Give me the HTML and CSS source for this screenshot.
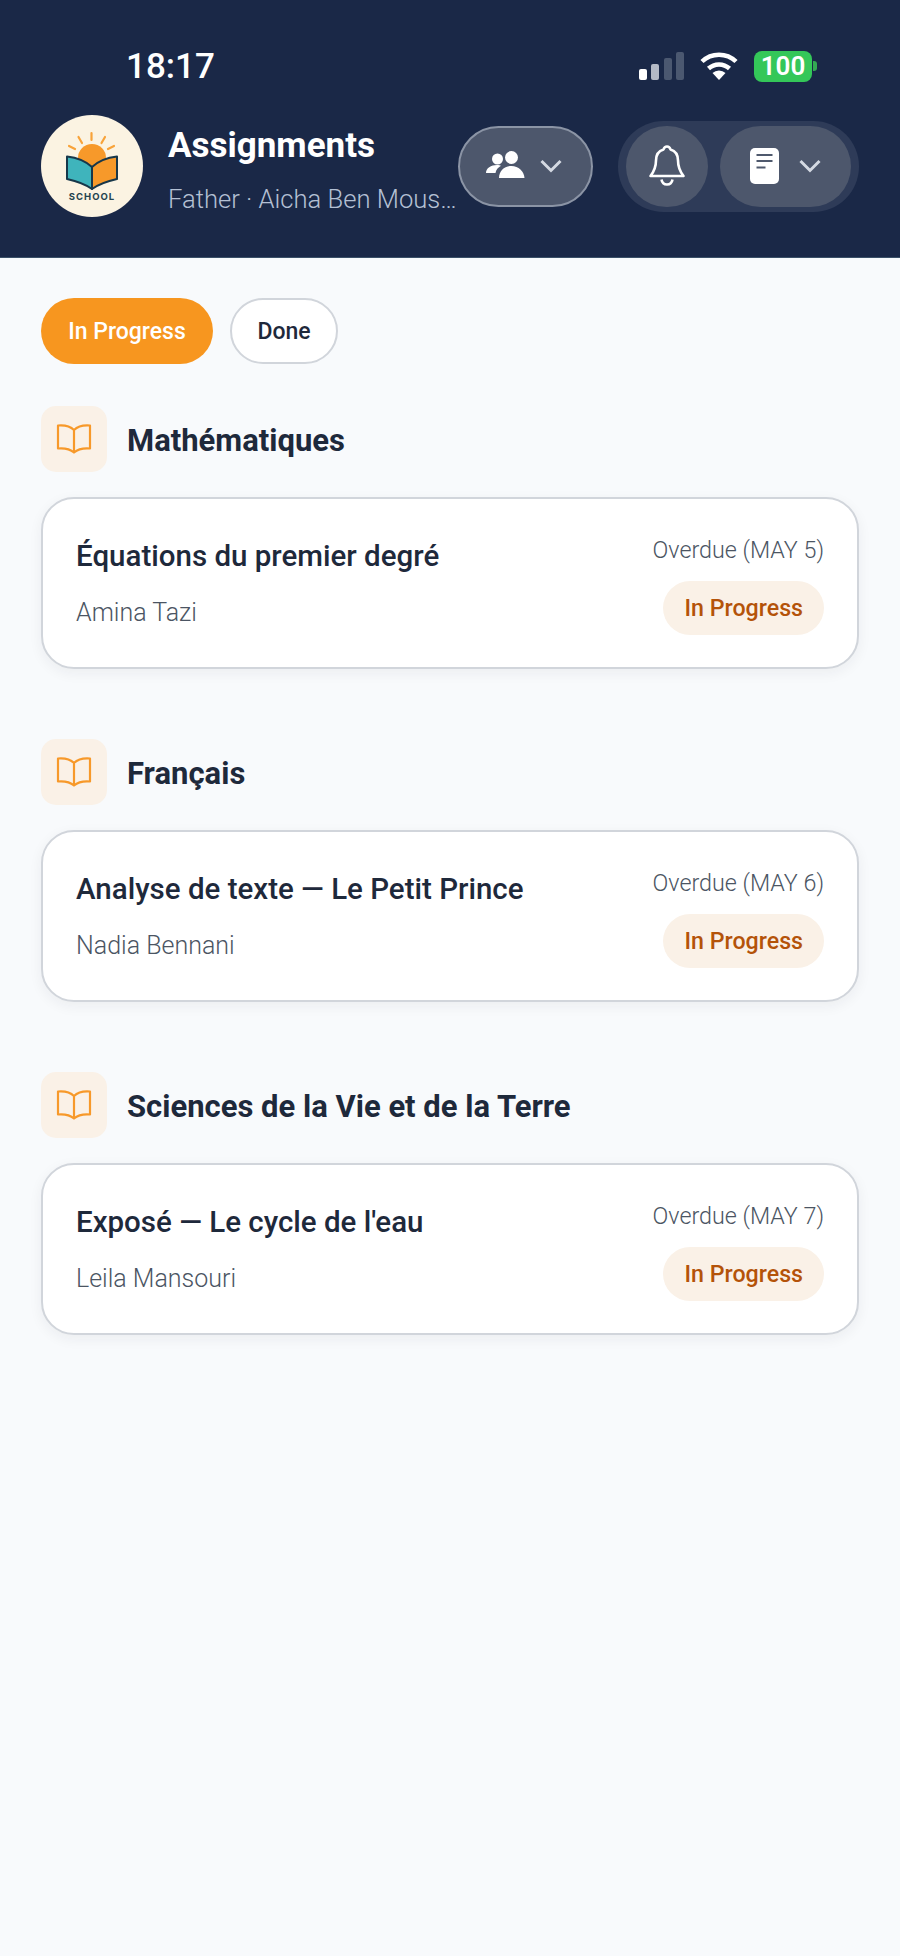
FILE: index.html
```html
<!DOCTYPE html>
<html lang="en">
<head>
  <meta charset="UTF-8">
  <title>Assignments</title>
  <link rel="stylesheet" href="styles.css">
</head>

<body>
<header class="top">
  <div class="status">
    <span class="clock">18:17</span>
    <div class="status-icons">
      <div class="signal">
        <span class="on"></span><span class="mid"></span><span></span><span></span>
      </div>
      <svg class="wifi" width="40" height="30" viewBox="0 0 40 30">
        <path d="M20 29l-6.500-7a9.500 9.500 0 0 1 13 0z" fill="#fff"/>
        <path d="M9.500 17.500a15.500 15.500 0 0 1 21 0" fill="none" stroke="#fff" stroke-width="4.500"/>
        <path d="M3 10.500a24.500 24.500 0 0 1 34 0" fill="none" stroke="#fff" stroke-width="4.500"/>
      </svg>
      <div class="battery"><span class="battery-level">100</span><span class="battery-tip"></span></div>
    </div>
  </div>

  <div class="bar">
    <div class="logo">
      <svg width="102" height="102" viewBox="0 0 102 102">
        <circle cx="51" cy="51" r="51" fill="#fbf3e2"/>
        <g stroke="#f8a33a" stroke-width="2.200" stroke-linecap="round">
          <path d="M50.500 18v7M37.500 22l3.500 6M64 22l-3.500 6M28 31l6 3M73 31l-6 3"/>
        </g>
        <circle cx="51" cy="43" r="14" fill="#f7992a"/>
        <path d="M26 41.500c9 1 18 4 25 10.500v22c-7-5-16-8-25-10z" fill="#3fb4bc" stroke="#17374a" stroke-width="2" stroke-linejoin="round"/>
        <path d="M76 41.500c-9 1-18 4-25 10.500v22c7-5 16-8 25-10z" fill="#f7992a" stroke="#17374a" stroke-width="2" stroke-linejoin="round"/>
        <text class="logo-text" x="51" y="84.500" text-anchor="middle">SCHOOL</text>
      </svg>
    </div>
    <div class="who">
      <h1>Assignments</h1>
      <p>Father · Aicha Ben Mous…</p>
    </div>
    <button class="pill pill-people">
      <svg width="40" height="30" viewBox="0 0 40 30" fill="#fff">
        <circle cx="11.500" cy="8" r="5.500"/>
        <circle cx="25.500" cy="6.500" r="6.500"/>
        <path d="M0 22c0-5 5-8 11-8 2 0 3 .3 4 .8-3 1.700-5 4-5.500 7.200z"/>
        <path d="M13 27c0-7 5.500-12 12.500-12S38 20 38.500 27z"/>
      </svg>
      <svg class="chev" width="22" height="14" viewBox="0 0 22 14"><path d="M1.500 2L11 11.500 20.500 2"/></svg>
    </button>
    <div class="tray">
      <button class="pill pill-bell">
        <svg width="36" height="42" viewBox="0 0 36 42" fill="none" stroke="#fff" stroke-width="2.600" stroke-linejoin="round">
          <path d="M18 1.500c1.800 0 3 1.300 3.500 3C26.500 6 29 10 29 15.500c0 7 2 11 5.500 15.500h-33C5 26.500 7 22.500 7 15.500 7 10 9.500 6 14.500 4.500c.5-1.700 1.700-3 3.500-3z"/>
          <path d="M12.500 34.500c.5 3 2.800 5 5.500 5s5-2 5.500-5"/>
        </svg>
      </button>
      <button class="pill pill-doc">
        <svg width="29" height="38" viewBox="0 0 29 38">
          <rect width="29" height="36" y="1" rx="5" fill="#fff"/>
          <path d="M6.500 8h16M6.500 14h16M6.500 20.500h9" stroke="#4f596d" stroke-width="2.200"/>
        </svg>
        <svg class="chev" width="22" height="14" viewBox="0 0 22 14"><path d="M1.500 2L11 11.500 20.500 2"/></svg>
      </button>
    </div>
  </div>
</header>

<main class="page">
  <div class="tabs">
    <button class="tab active">In Progress</button>
    <button class="tab">Done</button>
  </div>

  <section class="subject">
    <div class="subject-head">
      <span class="subject-icon">
        <svg width="36" height="32" viewBox="0 0 36 32"><use href="#book"/></svg>
      </span>
      <h2>Mathématiques</h2>
    </div>
    <article class="card">
      <div class="card-main">
        <h3>Équations du premier degré</h3>
        <p>Amina Tazi</p>
      </div>
      <div class="card-side">
        <span class="due">Overdue (MAY 5)</span>
        <span class="state">In Progress</span>
      </div>
    </article>
  </section>

  <section class="subject">
    <div class="subject-head">
      <span class="subject-icon">
        <svg width="36" height="32" viewBox="0 0 36 32"><use href="#book"/></svg>
      </span>
      <h2>Français</h2>
    </div>
    <article class="card">
      <div class="card-main">
        <h3>Analyse de texte — Le Petit Prince</h3>
        <p>Nadia Bennani</p>
      </div>
      <div class="card-side">
        <span class="due">Overdue (MAY 6)</span>
        <span class="state">In Progress</span>
      </div>
    </article>
  </section>

  <section class="subject">
    <div class="subject-head">
      <span class="subject-icon">
        <svg width="36" height="32" viewBox="0 0 36 32"><use href="#book"/></svg>
      </span>
      <h2>Sciences de la Vie et de la Terre</h2>
    </div>
    <article class="card">
      <div class="card-main">
        <h3>Exposé — Le cycle de l'eau</h3>
        <p>Leila Mansouri</p>
      </div>
      <div class="card-side">
        <span class="due">Overdue (MAY 7)</span>
        <span class="state">In Progress</span>
      </div>
    </article>
  </section>
</main>

<!-- shared book outline for the subject badges -->
<svg class="defs" width="0" height="0">
  <symbol id="book" viewBox="0 0 36 32">
    <path d="M18 7C14 3 8 2 2 2.500v23c6-.5 12 .5 16 4 4-3.500 10-4.500 16-4v-23C28 2 22 3 18 7zM18 7v22.500" fill="none" stroke="#f7992a" stroke-width="2.200" stroke-linejoin="round"/>
  </symbol>
</svg>
</body>
</html>
```

FILE: styles.css
```css
* {
  margin: 0;
  padding: 0;
  box-sizing: border-box;
  font-family: Roboto, "Noto Sans", Arial, sans-serif;
}

body {
  min-height: 1956px;
  background: #f8fafc;
  color: #1e293b;
}

button {
  border: 0;
  background: none;
}

/* Header */
.top {
  height: 258px;
  background: #1a2847;
  padding: 46px 41px 0;
  border-bottom: 1px solid #3a5068;
}

.status {
  height: 40px;
  display: flex;
  justify-content: space-between;
  align-items: center;
  padding: 0 42px 0 85px;
}

.clock {
  color: #fff;
  font-size: 35px;
  font-weight: 500;
}

.status-icons {
  display: flex;
  align-items: center;
  gap: 15px;
}

.signal {
  display: flex;
  align-items: flex-end;
  gap: 4.500px;
  height: 28px;
}

.signal span {
  width: 8px;
  height: 28px;
  border-radius: 2px;
  background: #4b5870;
}

.signal span:nth-child(1) {
  height: 11px;
  background: #fff;
}

.signal span:nth-child(2) {
  height: 16px;
  background: #b4bac6;
}

.signal span:nth-child(3) {
  height: 22px;
}

.battery {
  display: flex;
  align-items: center;
  gap: 1px;
}

.battery-level {
  width: 58px;
  height: 31px;
  border-radius: 8px;
  background: #34c759;
  color: #fff;
  font-size: 26px;
  font-weight: 600;
  line-height: 31px;
  text-align: center;
}

.battery-tip {
  width: 4px;
  height: 10px;
  border-radius: 0 3px 3px 0;
  background: #34a853;
}

.bar {
  margin-top: 29px;
  display: flex;
  align-items: center;
}

.logo {
  flex: none;
  width: 102px;
  height: 102px;
  margin-right: 25px;
}

.logo-text {
  font-family: Inter, sans-serif;
  font-size: 9.500px;
  font-weight: 700;
  letter-spacing: 1px;
  fill: #24434f;
}

.who {
  width: 290px;
  flex: none;
  padding-top: 8px;
}

.who h1 {
  color: #fff;
  font-size: 35px;
  font-weight: 700;
  line-height: 44px;
}

.who p {
  margin-top: 14px;
  color: #b4c0d4;
  font-size: 25.600px;
  font-weight: 300;
  line-height: 34px;
  white-space: nowrap;
}

.pill {
  display: flex;
  align-items: center;
  justify-content: center;
  height: 81px;
  border-radius: 41px;
  background: #4d576c;
}

.pill-people {
  width: 135px;
  gap: 14px;
  padding-right: 4px;
  border: 2px solid #8b94a5;
}

.tray {
  margin-left: auto;
  display: flex;
  gap: 12px;
  padding: 5px 8px;
  border-radius: 46px;
  background: #2e3b58;
}

.pill-bell {
  width: 82px;
}

.pill-doc {
  width: 131px;
  gap: 20px;
}

.chev {
  fill: none;
  stroke: #d4d9e2;
  stroke-width: 3;
}

/* Assignment list */
.page {
  padding: 40px 41px 0;
}

.tabs {
  display: flex;
  gap: 17px;
}

.tab {
  height: 66px;
  width: 108px;
  border-radius: 33px;
  border: 2px solid #d1d5db;
  background: #fff;
  color: #1e293b;
  font-size: 23px;
  font-weight: 500;
  white-space: nowrap;
}

.tab.active {
  width: 172px;
  border: 0;
  background: #f7961f;
  color: #fff;
}

.subject {
  margin-top: 42px;
}

.subject + .subject {
  margin-top: 70px;
}

.subject-head {
  display: flex;
  align-items: center;
  gap: 20px;
}

.subject-icon {
  width: 66px;
  height: 66px;
  border-radius: 15px;
  background: #faf1e7;
  display: flex;
  align-items: center;
  justify-content: center;
}

.subject-head h2 {
  padding-top: 2px;
  font-size: 31px;
  font-weight: 700;
}

.card {
  margin-top: 25px;
  height: 172px;
  padding: 0 33px;
  display: flex;
  justify-content: space-between;
  align-items: center;
  background: #fff;
  border: 2px solid #d1d5db;
  border-radius: 33px;
  box-shadow: 0 4px 14px rgba(30, 41, 59, .06);
}

.card-main h3 {
  font-size: 29.500px;
  font-weight: 500;
}

.card-main p {
  margin-top: 25px;
  color: #4b5563;
  font-size: 25px;
  font-weight: 300;
}

.card-side {
  display: flex;
  flex-direction: column;
  align-items: flex-end;
  gap: 17px;
  padding-top: 4px;
}

.due {
  color: #4b5563;
  font-size: 23.300px;
  font-weight: 300;
}

.state {
  height: 54px;
  padding: 0 21px;
  border-radius: 27px;
  background: #faf1e7;
  color: #b45309;
  font-size: 23.200px;
  font-weight: 500;
  line-height: 54px;
}

.defs {
  position: absolute;
}
```
